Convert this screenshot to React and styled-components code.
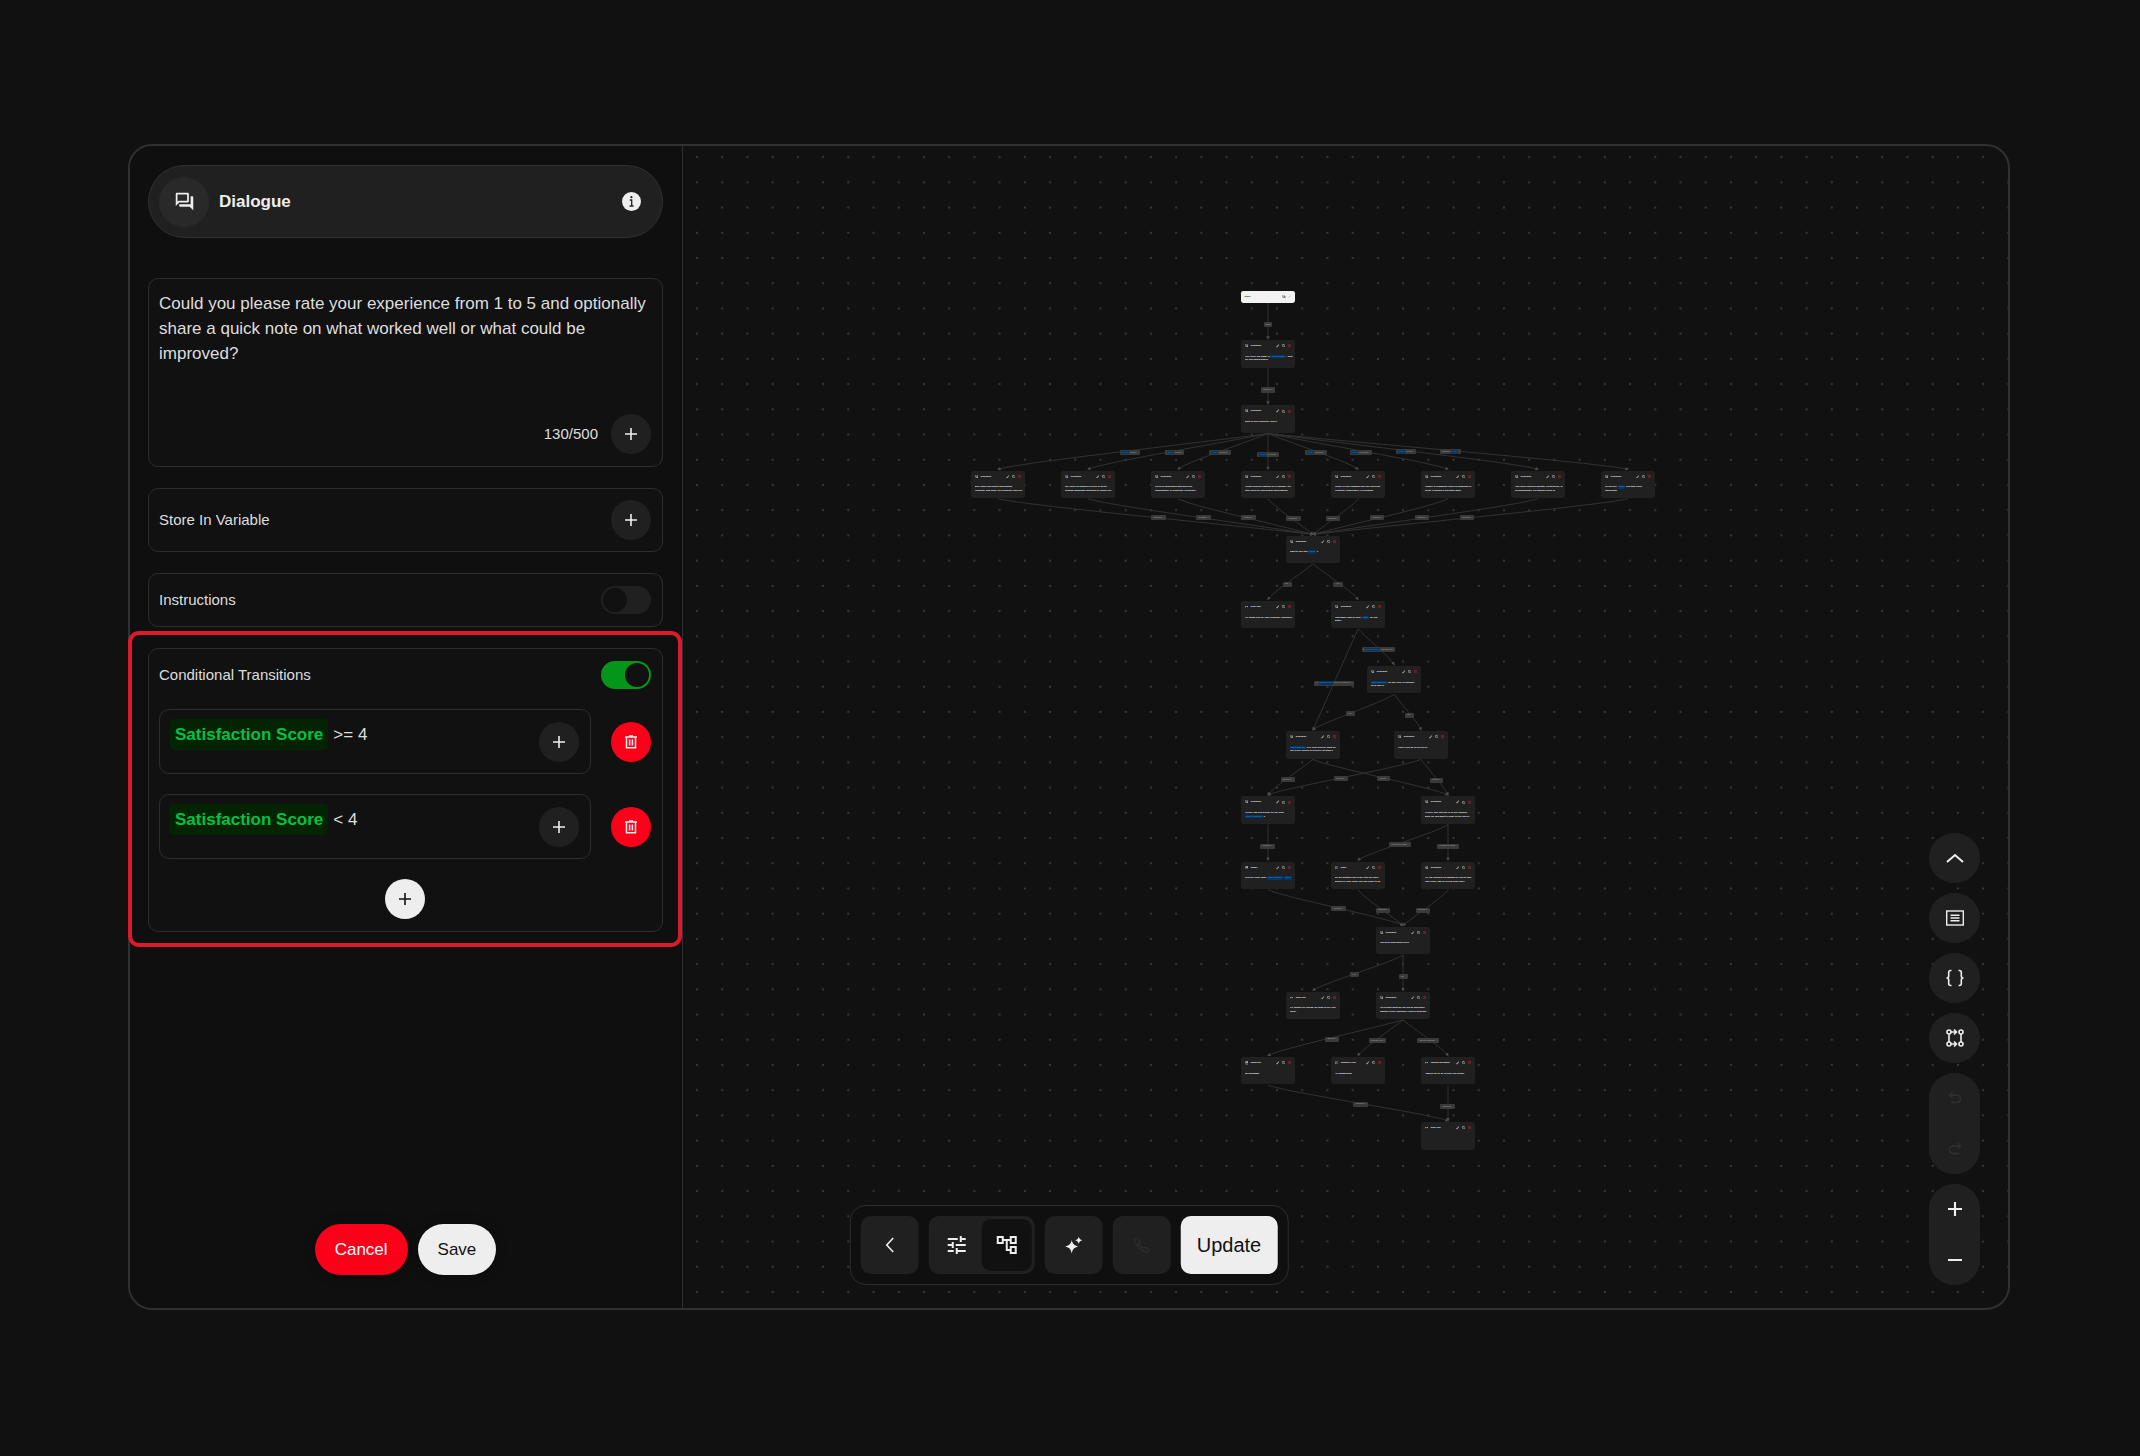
import React from "react";
import styled, { createGlobalStyle, css } from "styled-components";
import {
  MdOutlineForum,
  MdTune,
  MdOutlineAccountTree,
  MdOutlineEdit,
  MdContentCopy,
  MdCallEnd,
  MdOutlineSms,
  MdCalendarMonth,
} from "react-icons/md";
import { IoCallOutline } from "react-icons/io5";

const color = {
  page: "#111111",
  panel: "#0f0f0f",
  card: "#111111",
  surface: "#202020",
  line: "#2d2d2d",
  frame: "#313131",
  text: "#dedede",
  bright: "#eeeeee",
  red: "#fa0019",
};

const GlobalStyle = createGlobalStyle`
  *, *::before, *::after { box-sizing: border-box; }
  body {
    margin: 0;
    background: ${color.page};
    color: ${color.text};
    font-family: "Liberation Sans", Arial, sans-serif;
    font-size: 15px;
    line-height: 20px;
  }
  button, input, textarea { font: inherit; color: inherit; }
  button { border: 0; padding: 0; cursor: pointer; }
  svg { display: block; flex: none; }
`;

/* ---------- icons ---------- */

const Stroke = ({ size = 24, box = 24, width = 2, children }) => (
  <svg
    width={size}
    height={size}
    viewBox={`0 0 ${box} ${box}`}
    fill="none"
    stroke="currentColor"
    strokeWidth={width}
    aria-hidden="true"
  >
    {children}
  </svg>
);

const PlusIcon = ({ size = 12, width = 1.6 }) => (
  <Stroke size={size} box={12} width={width}>
    <path d="M6 0v12M0 6h12" />
  </Stroke>
);

const MinusIcon = () => (
  <Stroke size={14} box={14} width={2}>
    <path d="M0 7h14" />
  </Stroke>
);

const TrashIcon = ({ size = 14 }) => (
  <Stroke size={size} box={14} width={1.5}>
    <path d="M1 2h12M5 1h4M2.500 2.500v10.200h9V2.500M5.600 4.600v6M8.400 4.600v6" />
  </Stroke>
);

const InfoIcon = () => (
  <svg width="19" height="19" viewBox="0 0 19 19" aria-hidden="true">
    <circle cx="9.500" cy="9.500" r="9.500" fill="currentColor" />
    <circle cx="9.400" cy="5.200" r="1.100" fill="#202020" />
    <path d="M7.800 8h1.900v6M7.600 14h4" fill="none" stroke="#202020" strokeWidth="1.300" />
  </svg>
);

const BackIcon = () => (
  <Stroke size={16} box={16} width={1.6}>
    <path d="M11.500 1 5 8l6.500 7" />
  </Stroke>
);

const ChevronUpIcon = () => (
  <Stroke size={18} box={18} width={2}>
    <path d="M1 13 9 6l8 7" />
  </Stroke>
);

const ListIcon = () => (
  <Stroke size={18} box={18} width={1.4}>
    <rect x="0.7" y="2" width="16.600" height="14" />
    <path d="M4.500 6.200h9M4.500 9h9M4.500 11.800h9" />
  </Stroke>
);

const BracesIcon = () => (
  <Stroke size={20} box={20} width={1.6}>
    <path d="M6.500 2.500H5.700C4.300 2.500 3.700 3.200 3.700 4.500V8c0 1.300-.6 2-2.200 2 1.600 0 2.200.7 2.200 2v3.500c0 1.300.6 2 2 2h.8" />
    <path d="M13.500 2.500h.8c1.400 0 2 .7 2 2V8c0 1.300.6 2 2.200 2-1.600 0-2.200.7-2.200 2v3.500c0 1.300-.6 2-2 2h-.8" />
  </Stroke>
);

const GraphIcon = () => (
  <Stroke size={18} box={18} width={1.6}>
    <circle cx="3" cy="3" r="2" />
    <circle cx="15" cy="3" r="2" />
    <circle cx="3" cy="15" r="2" />
    <circle cx="15" cy="15" r="2" />
    <path d="M3 5v8M15 5v8M5 3h5M8 .5 10.500 3 8 5.500M5 15h5M8 12.500l2.500 2.500L8 17.500" />
  </Stroke>
);

const UndoIcon = () => (
  <Stroke size={14} box={14} width={1.5}>
    <path d="M4.500 1 1.500 4l3 3M1.500 4h7.300a3.700 3.700 0 0 1 0 7.500H3" />
  </Stroke>
);

const RedoIcon = () => (
  <Stroke size={14} box={14} width={1.5}>
    <path d="M9.500 1l3 3-3 3M12.500 4H5.200a3.700 3.700 0 0 0 0 7.500H11" />
  </Stroke>
);

const SparkIcon = () => (
  <svg width="18" height="18" viewBox="0 0 18 18" fill="currentColor" aria-hidden="true">
    <path d="M7 4c.9 4 2.300 5.400 6.500 6.500C9.300 11.600 7.900 13 7 17.500 6.100 13 4.700 11.600.5 10.500 4.700 9.400 6.100 8 7 4Z" />
    <path d="M14 .5c.5 2.300 1.300 3.100 3.700 3.700-2.400.6-3.200 1.400-3.700 3.700-.5-2.300-1.300-3.100-3.700-3.700 2.400-.6 3.200-1.400 3.700-3.700Z" />
  </svg>
);

/* ---------- shell ---------- */

const Page = styled.main`
  min-height: 100vh;
  display: flex;
  padding: 144px 130px 146px 128px;
`;

const Frame = styled.div`
  position: relative;
  flex: 1;
  display: flex;
  min-width: 0;
  border: 2px solid ${color.frame};
  border-radius: 24px;
`;

/* ---------- side panel ---------- */

const Panel = styled.form`
  width: 553px;
  flex: none;
  display: flex;
  flex-direction: column;
  gap: 21px;
  padding: 19px 19px 33px 18px;
  background: ${color.panel};
  border-right: 1px solid ${color.frame};
  border-radius: 22px 0 0 22px;
`;

const PanelHeader = styled.header`
  display: flex;
  align-items: center;
  gap: 10px;
  height: 73px;
  margin-bottom: 19px;
  padding: 0 21px 0 10px;
  background: ${color.surface};
  border: 1px solid ${color.frame};
  border-radius: 37px;
`;

const HeaderIcon = styled.span`
  display: grid;
  place-items: center;
  width: 50px;
  height: 50px;
  border-radius: 50%;
  background: #292929;
  color: ${color.bright};
`;

const Title = styled.h1`
  flex: 1;
  margin: 0;
  font-size: 17px;
  font-weight: 700;
  line-height: 25px;
  color: ${color.bright};
`;

const InfoButton = styled.button`
  display: grid;
  background: none;
  color: ${color.bright};
`;

const cardFrame = css`
  border: 1px solid ${color.line};
  border-radius: 10px;
  background: ${color.card};
`;

const Card = styled.section`
  ${cardFrame}
  display: flex;
  flex-direction: column;
  gap: 20px;
  padding: ${(p) => p.$pad || "11px 11px 11px 10px"};
  ${(p) =>
    p.$highlight &&
    css`
      position: relative;
      &::after {
        content: "";
        position: absolute;
        inset: -18px -20px -16px -21px;
        border: 4px solid #dc1a2b;
        border-radius: 11px;
        pointer-events: none;
      }
    `}
`;

const Row = styled.div`
  display: flex;
  align-items: center;
  justify-content: ${(p) => p.$justify || "space-between"};
  gap: ${(p) => p.$gap || "13px"};
`;

const Message = styled.textarea`
  height: 103px;
  padding: 0;
  border: 0;
  outline: 0;
  resize: none;
  background: none;
  font-size: 17px;
  line-height: 25px;
`;

const RoundButton = styled.button`
  display: grid;
  place-items: center;
  flex: none;
  width: 40px;
  height: 40px;
  border-radius: 50%;
  background: ${(p) => p.$bg || color.surface};
  color: ${(p) => p.$fg || color.bright};
`;

const Toggle = styled.input`
  appearance: none;
  flex: none;
  width: 50px;
  height: 28px;
  margin: 0;
  padding: 2px;
  border-radius: 14px;
  background: ${color.surface};
  cursor: pointer;
  &::before {
    content: "";
    display: block;
    width: 24px;
    height: 24px;
    border-radius: 50%;
    background: ${color.card};
  }
  &:checked {
    background: #04961b;
  }
  &:checked::before {
    margin-left: 22px;
  }
`;

const Condition = styled.div`
  ${cardFrame}
  flex: 1;
  min-width: 0;
  display: flex;
  align-items: center;
  gap: 5px;
  height: 65px;
  padding: 0 11px 0 10px;
`;

const VariableTag = styled.label`
  align-self: flex-start;
  margin-top: 9px;
  padding: 3px 5px;
  border-radius: 4px;
  background: #032403;
  color: #05c044;
  font-size: 17px;
  font-weight: 700;
  line-height: 25px;
  white-space: nowrap;
`;

const ConditionInput = styled.input`
  align-self: flex-start;
  flex: 1;
  min-width: 0;
  height: 31px;
  margin-top: 9px;
  padding: 0;
  border: 0;
  outline: 0;
  background: none;
  font-size: 17px;
`;

const PanelActions = styled.footer`
  display: flex;
  justify-content: center;
  gap: 10px;
  margin-top: auto;
`;

const PillButton = styled.button`
  height: 51px;
  padding: 0 20px;
  border-radius: 26px;
  background: ${(p) => p.$bg};
  color: ${(p) => p.$fg};
  font-size: 17px;
  box-shadow: 0 0 12px rgba(0, 0, 0, 0.3);
`;

/* ---------- canvas ---------- */

const CanvasArea = styled.section`
  position: relative;
  flex: 1;
  min-width: 0;
  overflow: hidden;
  border-radius: 0 22px 22px 0;
`;

const DotGrid = styled.svg`
  position: absolute;
  inset: 0;
  width: 100%;
  height: 100%;
`;

const Origin = styled.div`
  position: absolute;
  left: 288px;
  top: 145px;
`;

const ZOOM = 0.18;

const Viewport = styled.div`
  position: relative;
  zoom: ${ZOOM};
`;

const EdgeLayer = styled.svg`
  position: absolute;
  left: 0;
  top: 0;
  overflow: visible;
`;

const NodeCard = styled.article`
  position: absolute;
  width: 300px;
  height: ${(p) => (p.$start ? "64px" : "152px")};
  padding: 20px;
  border-radius: 12px;
  background: ${(p) => (p.$start ? "#f2f2f2" : color.surface)};
  color: ${(p) => (p.$start ? "#222222" : "#eeeeee")};
  font-size: 13px;
`;

const NodeHead = styled.div`
  display: flex;
  align-items: center;
  gap: 14px;
  height: 24px;
`;

const NodeTitle = styled.strong`
  flex: 1;
  font-size: 14px;
`;

const NodeText = styled.p`
  display: -webkit-box;
  -webkit-box-orient: vertical;
  -webkit-line-clamp: 2;
  overflow: hidden;
  margin: 37px -8px 0 0;
  line-height: 20px;
  font-weight: 700;
`;

const BlueTag = styled.mark`
  display: inline-block;
  padding: 0 5px;
  border-radius: 4px;
  background: #063560;
  color: #1283e0;
  white-space: nowrap;
`;

const RedMark = styled.span`
  color: #d02a3a;
`;

const Chip = styled.span`
  position: absolute;
  display: flex;
  align-items: center;
  justify-content: center;
  gap: 6px;
  width: ${(p) => p.$w}px;
  height: 28px;
  border-radius: 5px;
  background: #3a3a3a;
  color: #aaaaaa;
  font-size: 12px;
  white-space: nowrap;
  overflow: hidden;
`;

const rowY = (i) => 274 + i * 362;

const T = (text) => ({ tag: text });

const nodes = [
  { id: "a", x: 1500, r: 0, text: ["Hey! hello, my name is ", T("Agent Name"), " , how are you doing today?"] },
  { id: "b", x: 1500, r: 1, text: ["What is your favourite color?"] },
  { id: "c1", x: 0, r: 2, text: ["Blue often represents information, reliability, and calm. It's frequently used for"] },
  { id: "c2", x: 500, r: 2, text: ["The color red signifies errors or alerts, drawing immediate attention to issues like"] },
  { id: "c3", x: 1000, r: 2, text: ["Green is associated with success, confirmation, or positivity. It typically"] },
  { id: "c4", x: 1500, r: 2, text: ["Yellow conveys caution or a reminder. It's often used for non-urgent notifications."] },
  { id: "c5", x: 2000, r: 2, text: ["Purple is less common but can represent creativity, temperance, or premium."] },
  { id: "c6", x: 2500, r: 2, text: ["Orange is commonly used for warnings or alerts. It signals a potential issue"] },
  { id: "c7", x: 3000, r: 2, text: ["Pink often conveys warmth, friendliness, or personalization. It's typically used in"] },
  { id: "c8", x: 3500, r: 2, text: ["So you like ", T("Color"), " can that looks significant!"] },
  { id: "d", x: 1750, r: 3, text: ["Want to buy this ", T("Color"), " ?"] },
  { id: "e1", x: 1500, r: 4, kind: "end", title: "End Call", text: ["Ok, thank you for your response, goodbye!"] },
  { id: "e2", x: 2000, r: 4, text: ["How many caps of your ", T("Color"), " do you want?"] },
  { id: "f", x: 2200, r: 5, text: [T("Tags Number"), " I'm sure this is enough? Need more?"] },
  { id: "g1", x: 1750, r: 6, text: [T("Tags Number"), " It is, your perfect, what do you prefer pickup or Delivery at home?"] },
  { id: "g2", x: 2350, r: 6, text: ["Prefer Pick up or Delivery?"] },
  { id: "h1", x: 1500, r: 7, text: ["Ok well can you please tell me your ", T("Home Address"), " ?"] },
  { id: "h2", x: 2500, r: 7, text: ["Ok well, any interest in 10 our finished, when do you want to come to our store?"] },
  { id: "i1", x: 1500, r: 8, kind: "calendar", title: "Email", text: ["Delivery Code Tags ", T("Tags Number"), " ", T("Color")] },
  { id: "i2", x: 2000, r: 8, kind: "sms", title: "SMS", text: ["We are putting your order into our store whenever your ready you can come to us"] },
  { id: "i3", x: 2500, r: 8, text: ["Ok, our finished I'm waiting for you to take your order, and to review your order"] },
  { id: "j", x: 2250, r: 9, text: ["You need something else?"] },
  { id: "k1", x: 1750, r: 10, kind: "end", title: "End Call", text: ["Ok, thanks for calling, we wish to see you soon!"] },
  { id: "k2", x: 2250, r: 10, text: ["Let's know what do you need? Booking? Transfer to the manager? Send a message"] },
  { id: "l1", x: 1500, r: 11, kind: "calendar", title: "Booking", text: ["JDA26783j80"] },
  { id: "l2", x: 2000, r: 11, kind: "sms", title: "Transfer Call", text: ["+1(408)5576789"] },
  { id: "l3", x: 2500, r: 11, kind: "end", title: "Taking Message", text: ["I would like to be in your call please"] },
  { id: "m", x: 2500, r: 12, kind: "end", title: "End Call", text: [] },
];

/* [source, target, rounded at source, rounded at target] */
const edges = [
  ["a", "b", 0, 0],
  ...["c1", "c2", "c3", "c4", "c5", "c6", "c7", "c8"].flatMap((c) => [
    ["b", c, 0, 1],
    [c, "d", 1, 0],
  ]),
  ["d", "e1", 0, 1],
  ["d", "e2", 0, 1],
  ["e2", "f", 0, 1],
  ["e2", "g1", 0, 0],
  ["f", "g1", 1, 1],
  ["f", "g2", 0, 1],
  ["g1", "h1", 0, 1],
  ["g1", "h2", 1, 1],
  ["g2", "h1", 1, 1],
  ["g2", "h2", 0, 1],
  ["h1", "i1", 0, 0],
  ["h2", "i2", 1, 1],
  ["h2", "i3", 0, 0],
  ["i1", "j", 1, 1],
  ["i2", "j", 1, 0],
  ["i3", "j", 1, 0],
  ["j", "k1", 1, 1],
  ["j", "k2", 0, 0],
  ["k2", "l1", 0, 1],
  ["k2", "l2", 0, 1],
  ["k2", "l3", 0, 1],
  ["l1", "m", 1, 1],
  ["l3", "m", 0, 0],
];

const chips = [
  { x: 1650, y: 187, w: 40, label: "Start" },
  { x: 1650, y: 550, w: 80, label: "Continue ›" },
  { x: 883, y: 897, w: 108, tag: "Color", label: "is Blue ›" },
  { x: 1132, y: 897, w: 104, tag: "Color", label: "is Red ›" },
  { x: 1383, y: 898, w: 118, tag: "Color", label: "is Green ›" },
  { x: 1650, y: 911, w: 118, tag: "Color", label: "is Yellow ›" },
  { x: 1917, y: 898, w: 118, tag: "Color", label: "is Purple ›" },
  { x: 2165, y: 897, w: 124, tag: "Color", label: "is Orange ›" },
  { x: 2417, y: 894, w: 108, tag: "Color", label: "is Pink ›" },
  { x: 2665, y: 894, w: 118, lead: "Unlisted", tag: "Color", label: "›" },
  { x: 1041, y: 1259, w: 80, label: "Continue ›" },
  { x: 1291, y: 1259, w: 80, label: "Continue ›" },
  { x: 1541, y: 1259, w: 80, label: "Continue ›" },
  { x: 1791, y: 1265, w: 80, label: "Continue ›" },
  { x: 2010, y: 1265, w: 80, label: "Continue ›" },
  { x: 2257, y: 1259, w: 80, label: "Continue ›" },
  { x: 2507, y: 1259, w: 80, label: "Continue ›" },
  { x: 2757, y: 1259, w: 80, label: "Continue ›" },
  { x: 1759, y: 1628, w: 50, label: "No ›" },
  { x: 2039, y: 1628, w: 52, label: "Yes ›" },
  { x: 2263, y: 1991, w: 184, lead: "If", tag: "Tags Number", label: "less than 10 ›" },
  { x: 2017, y: 2178, w: 222, lead: "If", tag: "Tags Number", label: "more or equal 10 ›" },
  { x: 2107, y: 2348, w: 52, label: "Yes ›" },
  { x: 2435, y: 2357, w: 48, label: "No ›" },
  { x: 1759, y: 2715, w: 78, label: "Delivery ›" },
  { x: 2056, y: 2709, w: 78, label: "Delivery ›" },
  { x: 2291, y: 2709, w: 70, label: "Pickup ›" },
  { x: 2585, y: 2718, w: 70, label: "Pickup ›" },
  { x: 1648, y: 3085, w: 80, label: "Continue ›" },
  { x: 2383, y: 3074, w: 124, label: "Separated Order ›" },
  { x: 2650, y: 3085, w: 120, label: "Combined Order ›" },
  { x: 2041, y: 3433, w: 82, label: "Continue ›" },
  { x: 2289, y: 3439, w: 82, label: "Continue ›" },
  { x: 2511, y: 3439, w: 82, label: "Continue ›" },
  { x: 2130, y: 3798, w: 50, label: "Yes ›" },
  { x: 2400, y: 3809, w: 50, label: "No ›" },
  { x: 2006, y: 4157, w: 74, label: "Booking ›" },
  { x: 2259, y: 4165, w: 98, label: "Transfer Call ›" },
  { x: 2539, y: 4165, w: 118, label: "Taking Message ›" },
  { x: 2165, y: 4518, w: 82, label: "Continue ›" },
  { x: 2648, y: 4533, w: 82, label: "Continue ›" },
];

const nodeIcons = {
  dialogue: <MdOutlineForum size={20} />,
  end: <MdCallEnd size={20} />,
  sms: <MdOutlineSms size={20} />,
  calendar: <MdCalendarMonth size={20} />,
};

const byId = Object.fromEntries(nodes.map((n) => [n.id, n]));

function edgePath([from, to, roundStart, roundEnd]) {
  const s = byId[from];
  const t = byId[to];
  const sx = s.x + 150;
  const sy = rowY(s.r) + 156;
  const tx = t.x + 150;
  const ty = rowY(t.r) - 8;
  const dx = tx - sx;
  const dy = ty - sy;
  const c1 = roundStart ? [sx + dx * 0.1, sy + dy * 0.2] : [sx + dx * 0.35, sy + dy * 0.35];
  const c2 = roundEnd ? [tx - dx * 0.1, ty - dy * 0.2] : [tx - dx * 0.35, ty - dy * 0.35];
  return `M${sx} ${sy}C${c1[0]} ${c1[1]} ${c2[0]} ${c2[1]} ${tx} ${ty}`;
}

function FlowNode({ node }) {
  return (
    <NodeCard style={{ left: node.x, top: rowY(node.r) }}>
      <NodeHead>
        {nodeIcons[node.kind || "dialogue"]}
        <NodeTitle>{node.title || "Dialogue"}</NodeTitle>
        <MdOutlineEdit size={20} />
        <MdContentCopy size={18} />
        <RedMark>
          <TrashIcon size={18} />
        </RedMark>
      </NodeHead>
      <NodeText>
        {node.text.map((part, i) => (part.tag ? <BlueTag key={i}>{part.tag}</BlueTag> : part))}
      </NodeText>
    </NodeCard>
  );
}

const GRID = 140.1 * ZOOM;

function FlowCanvas() {
  return (
    <CanvasArea aria-label="Conversation flow">
      <DotGrid aria-hidden="true">
        <defs>
          <pattern id="dots" x="1.4" y="-1.4" width={GRID} height={GRID} patternUnits="userSpaceOnUse">
            <circle cx="12.600" cy="12.600" r="1.100" fill="#3a3a3a" />
          </pattern>
        </defs>
        <rect width="100%" height="100%" fill="url(#dots)" />
      </DotGrid>
      <Origin>
        <Viewport>
          <EdgeLayer width="3800" height="4800" fill="none" stroke="#363636" strokeWidth="5" aria-hidden="true">
            <defs>
              <marker id="arrow" markerWidth="5" markerHeight="5" refX="3" refY="2" orient="auto">
                <path d="M0 0 4 2 0 4Z" fill="#4c4c4c" stroke="none" />
              </marker>
            </defs>
            <path d={`M1650 62V${rowY(0) - 8}`} markerEnd="url(#arrow)" />
            {edges.map((e) => (
              <path key={e[0] + e[1]} d={edgePath(e)} markerEnd="url(#arrow)" />
            ))}
          </EdgeLayer>
          <NodeCard $start style={{ left: 1500, top: 0 }}>
            <NodeHead>
              <NodeTitle>Start</NodeTitle>
              <MdOutlineForum size={20} />
              <MdOutlineEdit size={18} color="#bbbbbb" />
            </NodeHead>
          </NodeCard>
          {nodes.map((n) => (
            <FlowNode key={n.id} node={n} />
          ))}
          {chips.map((c) => (
            <Chip key={`${c.x}-${c.y}`} $w={c.w} style={{ left: c.x - c.w / 2, top: c.y - 14 }}>
              {c.lead}
              {c.tag && <BlueTag>{c.tag}</BlueTag>}
              {c.label}
            </Chip>
          ))}
        </Viewport>
      </Origin>
    </CanvasArea>
  );
}

/* ---------- floating controls ---------- */

const Toolbar = styled.nav`
  position: absolute;
  left: 50%;
  bottom: 23px;
  translate: -50% 0;
  display: flex;
  gap: 10px;
  padding: 10px;
  border: 1px solid ${color.line};
  border-radius: 16px;
  background: ${color.panel};
`;

const ToolButton = styled.button`
  display: grid;
  place-items: center;
  width: 58px;
  height: 58px;
  border-radius: 10px;
  background: ${color.surface};
  color: ${(p) => (p.disabled ? "#303030" : color.bright)};
`;

const Segment = styled.div`
  display: flex;
  padding: 3px;
  border-radius: 10px;
  background: ${color.surface};
`;

const SegmentButton = styled.button`
  display: grid;
  place-items: center;
  width: 50px;
  height: 52px;
  border-radius: 9px;
  background: ${(p) => (p.$active ? color.card : "transparent")};
  color: ${color.bright};
`;

const UpdateButton = styled.button`
  height: 58px;
  padding: 0 16px;
  border-radius: 10px;
  background: ${color.bright};
  color: #111111;
  font-size: 20px;
`;

const Rail = styled.nav`
  position: absolute;
  right: 28px;
  bottom: 23px;
  display: flex;
  flex-direction: column;
  gap: 10px;
`;

const RailButton = styled.button`
  display: grid;
  place-items: center;
  width: 51px;
  height: 50px;
  border-radius: 26px;
  background: ${color.surface};
  color: ${(p) => (p.disabled ? "#303030" : color.bright)};
`;

const RailGroup = styled.div`
  display: flex;
  flex-direction: column;
  gap: 1px;
  border-radius: 26px;
  background: ${color.surface};
`;

const AddButton = (props) => (
  <RoundButton type="button" {...props}>
    <PlusIcon />
  </RoundButton>
);

function ConditionRow({ id, value }) {
  return (
    <Row $gap="20px">
      <Condition>
        <VariableTag htmlFor={id}>Satisfaction Score</VariableTag>
        <ConditionInput id={id} defaultValue={value} />
        <AddButton aria-label="Insert variable" />
      </Condition>
      <RoundButton type="button" $bg={color.red} aria-label="Delete condition">
        <TrashIcon />
      </RoundButton>
    </Row>
  );
}

const togglePad = "12px 11px 12px 10px";

export default function App() {
  return (
    <>
      <GlobalStyle />
      <Page>
        <Frame>
          <Panel onSubmit={(e) => e.preventDefault()}>
            <PanelHeader>
              <HeaderIcon>
                <MdOutlineForum size={21} />
              </HeaderIcon>
              <Title>Dialogue</Title>
              <InfoButton type="button" aria-label="About this step">
                <InfoIcon />
              </InfoButton>
            </PanelHeader>

            <Card $pad={togglePad}>
              <Message
                aria-label="Dialogue message"
                defaultValue="Could you please rate your experience from 1 to 5 and optionally share a quick note on what worked well or what could be improved?"
              />
              <Row $justify="flex-end">
                <span>130/500</span>
                <AddButton aria-label="Insert variable" />
              </Row>
            </Card>

            <Card>
              <Row>
                <span>Store In Variable</span>
                <AddButton aria-label="Choose variable" />
              </Row>
            </Card>

            <Card $pad={togglePad}>
              <Row>
                <label htmlFor="instructions">Instructions</label>
                <Toggle type="checkbox" id="instructions" />
              </Row>
            </Card>

            <Card $highlight $pad={togglePad}>
              <Row>
                <label htmlFor="conditional">Conditional Transitions</label>
                <Toggle type="checkbox" id="conditional" defaultChecked />
              </Row>
              <ConditionRow id="condition-1" value=">= 4" />
              <ConditionRow id="condition-2" value="< 4" />
              <Row $justify="center">
                <AddButton $bg={color.bright} $fg="#111111" aria-label="Add condition" />
              </Row>
            </Card>

            <PanelActions>
              <PillButton type="button" $bg={color.red} $fg="#ffffff">
                Cancel
              </PillButton>
              <PillButton type="submit" $bg={color.bright} $fg="#111111">
                Save
              </PillButton>
            </PanelActions>
          </Panel>

          <FlowCanvas />

          <Toolbar aria-label="Editor">
            <ToolButton aria-label="Back">
              <BackIcon />
            </ToolButton>
            <Segment>
              <SegmentButton aria-label="Settings">
                <MdTune size={24} />
              </SegmentButton>
              <SegmentButton $active aria-label="Flow">
                <MdOutlineAccountTree size={24} />
              </SegmentButton>
            </Segment>
            <ToolButton aria-label="Assistant">
              <SparkIcon />
            </ToolButton>
            <ToolButton disabled aria-label="Call">
              <IoCallOutline size={18} />
            </ToolButton>
            <UpdateButton>Update</UpdateButton>
          </Toolbar>

          <Rail aria-label="Canvas">
            <RailButton aria-label="Collapse">
              <ChevronUpIcon />
            </RailButton>
            <RailButton aria-label="Notes">
              <ListIcon />
            </RailButton>
            <RailButton aria-label="Variables">
              <BracesIcon />
            </RailButton>
            <RailButton aria-label="Arrange">
              <GraphIcon />
            </RailButton>
            <RailGroup>
              <RailButton disabled aria-label="Undo">
                <UndoIcon />
              </RailButton>
              <RailButton disabled aria-label="Redo">
                <RedoIcon />
              </RailButton>
            </RailGroup>
            <RailGroup>
              <RailButton aria-label="Zoom in">
                <PlusIcon size={14} width={1.8} />
              </RailButton>
              <RailButton aria-label="Zoom out">
                <MinusIcon />
              </RailButton>
            </RailGroup>
          </Rail>
        </Frame>
      </Page>
    </>
  );
}
